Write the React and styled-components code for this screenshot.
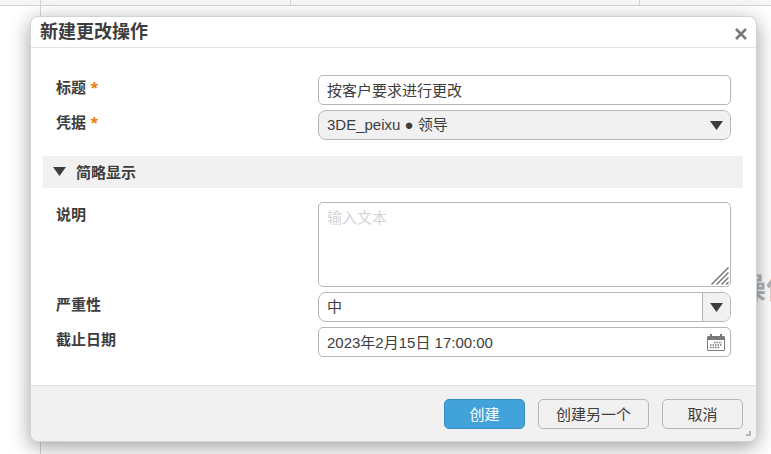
import React, { useState } from 'react';
import styled, { createGlobalStyle, css } from 'styled-components';

const severities = ['低', '中', '高'];

const App = () => {
  const [title, setTitle] = useState('按客户要求进行更改');
  const [description, setDescription] = useState('');
  const [severity, setSeverity] = useState('中');
  const [dueDate, setDueDate] = useState('2023年2月15日 17:00:00');
  const [isExpanded, setIsExpanded] = useState(true);

  return (
    <>
      <GlobalStyle />
      <Page>
        <Backdrop aria-hidden="true">
          <TopStrip>
            <StripCell width="41px" />
            <StripCell width="250px" />
            <StripCell width="349px" />
          </TopStrip>
          <Workspace>
            <SidePane />
            <MainPane>操作</MainPane>
          </Workspace>
        </Backdrop>
        <Dialog role="dialog" aria-labelledby="dialog-title">
          <Header>
            <DialogTitle id="dialog-title">新建更改操作</DialogTitle>
            <CloseButton type="button" aria-label="关闭">
              <CloseIcon />
            </CloseButton>
          </Header>
          <Form id="change-form" onSubmit={e => e.preventDefault()}>
            <Fields>
              <Row>
                <Label htmlFor="title">
                  标题 <Required>*</Required>
                </Label>
                <TextInput
                  id="title"
                  value={title}
                  onChange={e => setTitle(e.target.value)}
                />
              </Row>
              <Row>
                <Label htmlFor="credentials">
                  凭据 <Required>*</Required>
                </Label>
                <Control>
                  <Select id="credentials" filled>
                    <option>3DE_peixu ● 领导</option>
                  </Select>
                  <SelectArrow>
                    <ArrowIcon />
                  </SelectArrow>
                </Control>
              </Row>
            </Fields>
            <SectionToggle
              type="button"
              aria-expanded={isExpanded}
              onClick={() => setIsExpanded(!isExpanded)}
            >
              <ArrowIcon />
              简略显示
            </SectionToggle>
            {isExpanded && (
              <Fields>
                <Row>
                  <Label htmlFor="description">说明</Label>
                  <Control>
                    <TextArea
                      id="description"
                      placeholder="输入文本"
                      value={description}
                      onChange={e => setDescription(e.target.value)}
                    />
                    <GripIcon />
                  </Control>
                </Row>
                <Row>
                  <Label htmlFor="severity">严重性</Label>
                  <Control>
                    <Select
                      id="severity"
                      value={severity}
                      onChange={e => setSeverity(e.target.value)}
                    >
                      {severities.map(name => (
                        <option key={name}>{name}</option>
                      ))}
                    </Select>
                    <SelectArrow boxed>
                      <ArrowIcon />
                    </SelectArrow>
                  </Control>
                </Row>
                <Row>
                  <Label htmlFor="due-date">截止日期</Label>
                  <Control>
                    <TextInput
                      id="due-date"
                      value={dueDate}
                      onChange={e => setDueDate(e.target.value)}
                    />
                    <CalendarButton type="button" aria-label="选择日期">
                      <CalendarIcon />
                    </CalendarButton>
                  </Control>
                </Row>
              </Fields>
            )}
          </Form>
          <Footer>
            <Button type="submit" form="change-form" primary>
              创建
            </Button>
            <Button type="button">创建另一个</Button>
            <Button type="button">取消</Button>
            <Corner />
          </Footer>
        </Dialog>
      </Page>
    </>
  );
};

export default App;

const CloseIcon = () => (
  <svg width="12" height="12" viewBox="0 0 12 12" aria-hidden="true">
    <path d="M1 1L11 11M11 1L1 11" stroke="#77797c" strokeWidth="2.6" />
  </svg>
);

const ArrowIcon = () => (
  <svg width="13" height="9" viewBox="0 0 13 9" aria-hidden="true">
    <path d="M0 0H13L6.5 9Z" fill="#3d3d3d" />
  </svg>
);

const CalendarIcon = () => (
  <svg width="18" height="17" viewBox="0 0 18 17" aria-hidden="true">
    <path
      fill="#77797c"
      fillRule="evenodd"
      d="M3 0H5V2H13V0H15V2H17L18 3V16L17 17H1L0 16V3L1 2H3ZM1 6V16H17V6Z"
    />
    <path
      d="M7 8.500H15M3 11H15M3 13.500H12"
      stroke="#77797c"
      strokeWidth="1.500"
      strokeDasharray="1.500 1"
    />
  </svg>
);

const GripIcon = () => (
  <Grip width="18" height="18" viewBox="0 0 18 18" aria-hidden="true">
    <path
      d="M0.500 17.500L17.500 0.500M5.500 17.500L17.500 5.500M10.500 17.500L17.500 10.500M15 17.500L17.500 15"
      stroke="#6f7073"
      strokeWidth="1.400"
    />
  </Grip>
);

const GlobalStyle = createGlobalStyle`
  * {
    box-sizing: border-box;
  }

  body {
    margin: 0;
    background: #fff;
    color: #3d3d3d;
    font-family: 'Liberation Sans', 'Noto Sans CJK SC', sans-serif;
    font-size: 15px;
  }

  button,
  input,
  select,
  textarea {
    font: inherit;
    color: inherit;
  }
`;

const Page = styled.div`
  display: grid;
  min-height: 100vh;
  overflow: hidden;

  > * {
    grid-area: 1 / 1;
  }
`;

const Backdrop = styled.div`
  display: flex;
  flex-direction: column;
  min-width: 0;
`;

const TopStrip = styled.div`
  display: flex;
  height: 6px;
  background: #f6f6f6;
  border-bottom: 1px solid #d3d5d6;
`;

const StripCell = styled.div`
  width: ${props => props.width};
  border-right: 1px solid #d3d5d6;
`;

const Workspace = styled.div`
  display: flex;
  flex: 1;
`;

const SidePane = styled.div`
  width: 41px;
  border-right: 1px solid #d3d5d6;
`;

const MainPane = styled.div`
  display: flex;
  flex: 1;
  align-items: center;
  justify-content: flex-end;
  padding-top: 112px;
  margin-right: -24px;
  color: #b4b6ba;
  font-size: 29px;
  font-weight: bold;
  white-space: nowrap;
`;

const Dialog = styled.section`
  z-index: 1;
  align-self: start;
  min-width: 0;
  margin: 16px 14px 12px 30px;
  background: #fff;
  border: 1px solid #d1d4d4;
  border-radius: 8px;
  box-shadow: 0 5px 20px rgba(0, 0, 0, 0.38);
`;

const Header = styled.header`
  display: flex;
  align-items: center;
  justify-content: space-between;
  height: 31px;
  padding: 0 9px;
  border-bottom: 1px solid #e2e4e3;
`;

const DialogTitle = styled.h1`
  margin: 0;
  font-size: 18px;
  line-height: 30px;
`;

const CloseButton = styled.button`
  display: flex;
  padding: 4px 0 0;
  border: none;
  background: none;
  cursor: pointer;
`;

const Form = styled.form`
  display: flex;
  flex-direction: column;
  gap: 16px;
  padding: 27px 13px 28px 12px;
`;

const Fields = styled.div`
  display: flex;
  flex-direction: column;
  gap: 5px;
  padding: 0 12px 0 13px;

  button + & {
    margin-top: -2px;
  }
`;

const Row = styled.div`
  display: grid;
  grid-template-columns: 262px 1fr;
`;

const Label = styled.label`
  font-weight: bold;
  line-height: 25px;
`;

const Required = styled.span`
  color: #e87b00;
  font-family: 'Open Sans', sans-serif;
  line-height: 1;
`;

const Control = styled.div`
  position: relative;
  display: flex;
  min-width: 0;
`;

const fieldStyle = css`
  width: 100%;
  min-width: 0;
  border: 1px solid #b4b6ba;
  border-radius: 5px;
  background: #fff;
  outline: none;
`;

const TextInput = styled.input`
  ${fieldStyle}
  height: 30px;
  padding: 0 8px 2px;
`;

const Select = styled.select.withConfig({
  shouldForwardProp: prop => prop !== 'filled',
})`
  ${fieldStyle}
  height: 30px;
  padding: 0 36px 2px 8px;
  border-radius: 8px;
  background: ${({ filled }) => (filled ? '#f1f1f1' : '#fff')};
  appearance: none;
`;

const TextArea = styled.textarea`
  ${fieldStyle}
  height: 85px;
  padding: 3px 8px;
  line-height: 24px;
  resize: none;

  &::placeholder {
    color: #d5d5d8;
  }
`;

const SelectArrow = styled.span.withConfig({
  shouldForwardProp: prop => prop !== 'boxed',
})`
  position: absolute;
  top: 1px;
  right: 1px;
  bottom: 1px;
  display: flex;
  align-items: center;
  justify-content: center;
  width: 28px;
  border-left: 1px solid ${({ boxed }) => (boxed ? '#b4b6ba' : 'transparent')};
  border-radius: 0 7px 7px 0;
  background: #f1f1f1;
  pointer-events: none;
`;

const Grip = styled.svg`
  position: absolute;
  right: 2px;
  bottom: 2px;
  pointer-events: none;
`;

const CalendarButton = styled.button`
  position: absolute;
  top: 1px;
  right: 1px;
  bottom: 1px;
  display: flex;
  align-items: center;
  padding: 0 5px;
  border: none;
  background: none;
  cursor: pointer;
`;

const SectionToggle = styled.button`
  display: flex;
  align-items: center;
  gap: 10px;
  height: 32px;
  padding: 0 10px 2px;
  border: none;
  background: #f1f1f1;
  font-weight: bold;
  cursor: pointer;
`;

const Footer = styled.footer`
  position: relative;
  display: flex;
  justify-content: flex-end;
  gap: 13px;
  padding: 13px 13px 12px;
  border-top: 1px solid #e2e4e3;
  border-radius: 0 0 7px 7px;
  background: #f1f1f1;
`;

const Button = styled.button.withConfig({
  shouldForwardProp: prop => prop !== 'primary',
})`
  height: 30px;
  min-width: 81px;
  padding: 0 17px 2px;
  border: 1px solid ${({ primary }) => (primary ? '#368ec4' : '#b4b6ba')};
  border-radius: 5px;
  background: ${({ primary }) => (primary ? '#42a2da' : '#f1f1f1')};
  color: ${({ primary }) => (primary ? '#fff' : '#3d3d3d')};
  cursor: pointer;
`;

const Corner = styled.span`
  position: absolute;
  right: 5px;
  bottom: 5px;
  width: 5px;
  height: 5px;
  border: solid #b4b6ba;
  border-width: 0 2px 2px 0;
`;
